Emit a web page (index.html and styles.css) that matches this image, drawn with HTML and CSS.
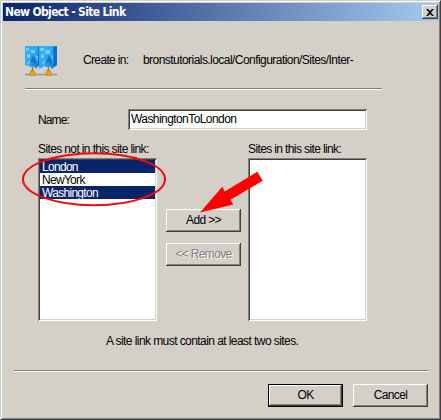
FILE: index.html
```
<!DOCTYPE html>
<html lang="en">
<head>
<meta charset="utf-8">
<title>New Object - Site Link</title>
<link rel="stylesheet" href="styles.css">
</head>
<body>
<main class="dialog">
  <header class="titlebar">
    <h1 class="title">New Object - Site Link</h1>
    <button class="close" aria-label="Close"><svg width="8" height="7" viewBox="0 0 8 7"><path d="M0 0h2l2 2 2-2h2L5 3.5 8 7H6L4 5 2 7H0l3-3.5z"/></svg></button>
  </header>
  <section class="intro">
    <svg class="site-icon" width="32" height="31" viewBox="0 0 32 31">
      <defs>
        <linearGradient id="glass" x1="0" y1="0" x2="1" y2="1"><stop offset="0" stop-color="#3fb0f2"/><stop offset=".5" stop-color="#2ba6f4"/><stop offset="1" stop-color="#0f6fd0"/></linearGradient>
      </defs>
      <path d="M0 28.500h32" stroke="#98948f" stroke-width="1.500"/>
      <path d="M7.500 19v6M23.500 19v6" stroke="#8d7c62" stroke-width="1.400"/>
      <path d="M0 0h14v20l-2 1-1 2-2-3-3 1-2-1-4-1z" fill="url(#glass)"/>
      <path d="M14 0h18v19l-3 2-2 2-2-3-3 1-3-1-1 1-4 2z" fill="url(#glass)"/>
      <path d="M1 2h3v3H1zM6 4h4v3H6zM2 8h3v4H2zM15 2h4v3h-4zM20 4h5v4h-5zM16 8h3v4h-3z" fill="#72cff9"/>
      <path d="M8 9l3 6-1 3-3-2-3 2zM24 9l3 6-1 3-3-2-3 2z" fill="#1473cc"/>
      <path d="M2 16l4-2-2 5-2-1zM17 16l4-2-2 5-2-1zM10 9l3 1v6zM26 9l2 1v6z" fill="#62cafa"/>
      <path d="M13 0h1v20h-1zM28 1l4-1v19l-3 2z" fill="#0b6fd0"/>
      <path d="M6 24.500h3l1.500 4-.5 1H5l-.5-1zM22 24.500h3l1.500 4-.5 1h-5l-.5-1z" fill="#e4a11c" stroke="#b97f12" stroke-width=".7"/>
    </svg>
    <p class="caption create">Create in:</p>
    <p class="caption path">bronstutorials.local/Configuration/Sites/Inter-</p>
  </section>
  <hr class="rule rule-top">
  <div class="name-row">
    <label class="name-label">Name:</label>
    <div class="field sunken"><span class="name-value">WashingtonToLondon</span></div>
  </div>
  <section class="lists">
    <div class="column">
      <h2 class="label">Sites not in this site link:</h2>
      <ul class="listbox sunken">
        <li class="item selected">London</li>
        <li class="item">NewYork</li>
        <li class="item selected">Washington</li>
      </ul>
    </div>
    <div class="actions">
      <button class="button">Add &gt;&gt;</button>
      <button class="button disabled">&lt;&lt; Remove</button>
    </div>
    <div class="column">
      <h2 class="label">Sites in this site link:</h2>
      <ul class="listbox sunken"></ul>
    </div>
  </section>
  <p class="hint">A site link must contain at least two sites.</p>
  <hr class="rule rule-bottom">
  <footer class="footer">
    <button class="button default">OK</button>
    <button class="button">Cancel</button>
  </footer>
  <svg class="annotations" width="441" height="420" viewBox="0 0 441 420">
    <ellipse cx="94" cy="179.200" rx="71" ry="26" fill="none" stroke="#f40a0a" stroke-width="2"/>
    <path d="M200 212.500L222.300 186.800 224.700 191.500 257.300 171.800 262.700 180.700 230.500 199.800 233.300 204.500z" fill="#fe0000"/>
  </svg>
</main>
</body>
</html>
```
FILE: styles.css
```
* { box-sizing: border-box; }
body { margin: 0; }
h1, h2, p, ul { margin: 0; padding: 0; font-weight: normal; }
ul { list-style: none; }

.dialog {
  position: relative;
  width: 441px;
  height: 420px;
  padding: 1px;
  overflow: hidden;
  background: #d4d0c8;
  border: 1px solid;
  border-color: #d4d0c8 #404040 #404040 #b5d0da;
  box-shadow: inset 1px 1px #fff, inset -1px -1px #808080;
  font: 12px/14px "Liberation Sans", Arial, sans-serif;
  color: #000;
  white-space: nowrap;
}
.titlebar {
  display: flex;
  justify-content: space-between;
  align-items: center;
  height: 18px;
  margin: 1px 0 0 1px;
  padding: 0 1px 0 2px;
  background: linear-gradient(90deg, #0a246a, #a6caf0);
}
.title {
  font: bold 12px/18px "DejaVu Sans Condensed", "DejaVu Sans", sans-serif;
  font-stretch: condensed;
  letter-spacing: -.65px;
  color: #fff;
}
.close {
  display: flex;
  justify-content: center;
  align-items: center;
  width: 16px;
  height: 14px;
  padding: 0;
  border: 0;
  background: #d4d0c8;
  box-shadow: inset -1px -1px #404040, inset 1px 1px #fff, inset -2px -2px #808080;
}
.intro { display: flex; height: 67px; padding: 25px 0 0 23px; }
.site-icon { display: block; flex: none; }
.caption { margin-top: 7px; }
.create { width: 60px; margin-left: 26px; letter-spacing: -.65px; }
.path { letter-spacing: -.55px; }
.rule { height: 2px; margin: 0; border: 0; background: #fff; border-top: 1px solid #808080; }
.rule-top { width: 357px; margin-left: 23px; }
.name-row { display: flex; height: 22px; margin: 19px 0 0 36px; }
.name-label { width: 90px; padding-top: 4px; letter-spacing: -.9px; }
.sunken {
  background: #fff;
  box-shadow: inset 1px 1px #808080, inset -1px -1px #fff, inset 2px 2px #404040, inset -2px -2px #d4d0c8;
}
.field { width: 239px; height: 21px; padding: 3px 0 0 3px; }
.name-value { letter-spacing: -.57px; }
.lists { display: flex; height: 179px; margin: 11px 0 0 36px; }
.column { width: 119px; }
.label { height: 16px; font-size: 12px; line-height: 14px; letter-spacing: -.62px; }
.listbox { height: 163px; padding: 2px; }
.item { height: 13px; padding-left: 2px; line-height: 14px; letter-spacing: -.7px; }
.selected { background: #0a246a; color: #fff; }
.actions { display: flex; flex-direction: column; gap: 11px; width: 91px; padding: 67px 0 0 9px; }
.button {
  width: 75px;
  height: 23px;
  padding: 0 0 1px;
  border: 0;
  background: #d4d0c8;
  box-shadow: inset -1px -1px #404040, inset 1px 1px #fff, inset -2px -2px #808080;
  font: inherit;
  letter-spacing: -.65px;
  color: #000;
}
.disabled { color: #808080; text-shadow: 1px 1px #fff; }
.default { border: 1px solid #000; }
.hint { margin: 13px 0 0 104px; letter-spacing: -.57px; }
.rule-bottom { width: 415px; margin: 22px 0 0 12px; }
.footer { display: flex; justify-content: flex-end; gap: 10px; margin: 12px 11px 0 0; }
.annotations { position: absolute; left: -1px; top: -1px; pointer-events: none; }
```
